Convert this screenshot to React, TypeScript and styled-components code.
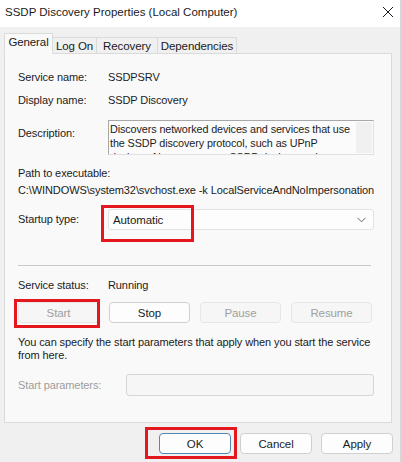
import styled, { createGlobalStyle } from "styled-components";

const GlobalStyle = createGlobalStyle`
  html, body {
    margin: 0;
    padding: 0;
    background: #f0f0f0;
  }
  body {
    font-family: "Liberation Sans", Arial, sans-serif;
    font-size: 11px;
    letter-spacing: -0.1px;
    color: #1b1b1b;
  }
`;

const Window = styled.div`
  width: 402px;
  height: 462px;
  display: flex;
  flex-direction: column;
  background: #f0f0f0;
  overflow: hidden;
  border-right: 2px solid #d6d6d6;
  box-sizing: border-box;
`;

const TitleBar = styled.div`
  height: 27px;
  background: #ffffff;
  display: flex;
  align-items: center;
  justify-content: space-between;
  padding: 0 8px 4px 5px;
  box-sizing: border-box;
  font-size: 11.5px;
  letter-spacing: 0;
  margin-right: -2px;
`;

const Body = styled.div`
  padding: 6px 0 0 4px;
  display: flex;
  flex-direction: column;
`;

const TabRow = styled.div`
  display: flex;
  align-items: flex-end;
  height: 21px;
  position: relative;
  z-index: 1;
  margin-bottom: -1px;
`;

const Tab = styled.div<{ $active?: boolean; $w: number }>`
  box-sizing: border-box;
  height: ${(p) => (p.$active ? "21px" : "17px")};
  width: ${(p) => p.$w}px;
  white-space: nowrap;
  display: flex;
  align-items: center;
  justify-content: center;
  border: 1px solid #dadada;
  border-bottom: 1px solid ${(p) => (p.$active ? "#f9f9f9" : "#dadada")};
  border-left: ${(p) => (p.$active ? "1px solid #dadada" : "none")};
  background: ${(p) => (p.$active ? "#f9f9f9" : "#f0f0f0")};
  font-size: 11.5px;
  padding-bottom: ${(p) => (p.$active ? "3px" : "0")};
`;

const Panel = styled.div`
  width: 388px;
  height: 370px;
  box-sizing: border-box;
  border: 1px solid #dadada;
  background: #f9f9f9;
  padding: 16px 17px 0 13px;
  display: flex;
  flex-direction: column;
`;

const Row = styled.div<{ $gap?: number; $col?: number }>`
  display: grid;
  grid-template-columns: ${(p) => p.$col ?? 90}px 1fr;
  align-items: center;
  margin-top: ${(p) => p.$gap ?? 0}px;
`;

const Label = styled.span<{ $muted?: boolean; $top?: number }>`
  color: ${(p) => (p.$muted ? "#9d9d9d" : "#1b1b1b")};
  align-self: ${(p) => (p.$top !== undefined ? "start" : "center")};
  margin-top: ${(p) => p.$top ?? 0}px;
  line-height: 15px;
`;

const Value = styled.span`
  line-height: 15px;
`;

const DescBox = styled.div`
  height: 35px;
  box-sizing: border-box;
  border: 1px solid #a8a8a8;
  border-right-color: #e0e0e0;
  border-bottom-color: #e0e0e0;
  background: #fbfbfb;
  display: flex;
  overflow: hidden;
`;

const DescText = styled.div`
  flex: 1;
  padding: 1px 0 0 1px;
  line-height: 14px;
  font-size: 10.8px;
  white-space: nowrap;
  overflow: hidden;
`;

const ScrollStrip = styled.div`
  width: 16px;
  background: #f0f0f0;
  margin: 1px 1px 1px 0;
`;

const Block = styled.div<{ $gap?: number }>`
  margin-top: ${(p) => p.$gap ?? 0}px;
  line-height: 15px;
  white-space: nowrap;
`;

const Select = styled.div`
  position: relative;
  height: 21px;
  box-sizing: border-box;
  border: 1px solid #e3e3e3;
  border-radius: 3px;
  background: #fdfdfd;
  display: flex;
  align-items: center;
  justify-content: space-between;
  padding: 0 7px 0 4px;
  font-size: 11.5px;
`;

const Marker = styled.div<{ $l: number; $t: number; $w: number; $h: number }>`
  position: absolute;
  left: ${(p) => p.$l}px;
  top: ${(p) => p.$t}px;
  width: ${(p) => p.$w}px;
  height: ${(p) => p.$h}px;
  border: 3px solid #e5171e;
  box-sizing: border-box;
  pointer-events: none;
`;

const Separator = styled.div`
  height: 1px;
  background: #c9c9c9;
  margin: 35px 3px 0 0;
`;

const ButtonRow = styled.div`
  display: grid;
  grid-template-columns: repeat(4, 81px);
  justify-content: space-between;
  margin: 9px 2px 0 0;
`;

const Button = styled.div<{ $disabled?: boolean; $primary?: boolean }>`
  position: relative;
  height: 21px;
  box-sizing: border-box;
  border: 1px solid
    ${(p) => (p.$primary ? "#4f87b5" : p.$disabled ? "#e6e6e6" : "#d0d0d0")};
  border-radius: 4px;
  background: ${(p) => (p.$disabled ? "#f6f6f6" : "#fdfdfd")};
  color: ${(p) => (p.$disabled ? "#a0a0a0" : "#1b1b1b")};
  display: flex;
  align-items: center;
  justify-content: center;
  font-size: 11.5px;
`;

const Para = styled.div`
  margin-top: 13px;
  line-height: 12.5px;
  white-space: nowrap;
`;

const Input = styled.div`
  height: 22px;
  box-sizing: border-box;
  border: 1px solid #d6d6d6;
  border-radius: 3px;
  background: #f6f6f6;
`;

const Footer = styled.div`
  display: flex;
  justify-content: flex-end;
  gap: 9px;
  padding: 10px 7px 0 0;
`;

const FooterButton = styled(Button)`
  width: 72px;
`;

const Close = () => (
  <svg width="12" height="12" viewBox="0 0 12 12">
    <path d="M1 1 L11 11 M11 1 L1 11" stroke="#1b1b1b" strokeWidth="1" fill="none" />
  </svg>
);

const Chevron = () => (
  <svg width="9" height="6" viewBox="0 0 9 6">
    <path d="M0.5 0.8 L4.5 4.8 L8.5 0.8" stroke="#555" strokeWidth="0.9" fill="none" />
  </svg>
);

const tabs = [
  { name: "General", w: 49, active: true },
  { name: "Log On", w: 44 },
  { name: "Recovery", w: 61 },
  { name: "Dependencies", w: 79 },
];

const App = () => {
  return (
    <Window>
      <GlobalStyle />
      <TitleBar>
        <span>SSDP Discovery Properties (Local Computer)</span>
        <Close />
      </TitleBar>
      <Body>
        <TabRow>
          {tabs.map((t) => (
            <Tab key={t.name} $active={t.active} $w={t.w}>
              {t.name}
            </Tab>
          ))}
        </TabRow>
        <Panel>
          <Row>
            <Label>Service name:</Label>
            <Value>SSDPSRV</Value>
          </Row>
          <Row $gap={8}>
            <Label>Display name:</Label>
            <Value>SSDP Discovery</Value>
          </Row>
          <Row $gap={12}>
            <Label $top={6}>Description:</Label>
            <DescBox>
              <DescText>
                Discovers networked devices and services that use
                <br />
                the SSDP discovery protocol, such as UPnP
                <br />
                devices. Also announces SSDP devices and
              </DescText>
              <ScrollStrip />
            </DescBox>
          </Row>
          <Block $gap={11}>Path to executable:</Block>
          <Block $gap={2}>
            C:\WINDOWS\system32\svchost.exe -k LocalServiceAndNoImpersonation
          </Block>
          <Row $gap={11}>
            <Label>Startup type:</Label>
            <Select>
              <span>Automatic</span>
              <Chevron />
              <Marker $l={-8} $t={-5} $w={93} $h={37} />
            </Select>
          </Row>
          <Separator />
          <Row $gap={12}>
            <Label>Service status:</Label>
            <Value>Running</Value>
          </Row>
          <ButtonRow>
            <Button $disabled>
              Start
              <Marker $l={-5} $t={-4} $w={86} $h={29} />
            </Button>
            <Button>Stop</Button>
            <Button $disabled>Pause</Button>
            <Button $disabled>Resume</Button>
          </ButtonRow>
          <Para>
            You can specify the start parameters that apply when you start the
            service
            <br />
            from here.
          </Para>
          <Row $gap={13} $col={108}>
            <Label $muted>Start parameters:</Label>
            <Input />
          </Row>
        </Panel>
        <Footer>
          <FooterButton $primary>
            OK
            <Marker $l={-15} $t={-7} $w={92} $h={32} />
          </FooterButton>
          <FooterButton>Cancel</FooterButton>
          <FooterButton>Apply</FooterButton>
        </Footer>
      </Body>
    </Window>
  );
};

export default App;
